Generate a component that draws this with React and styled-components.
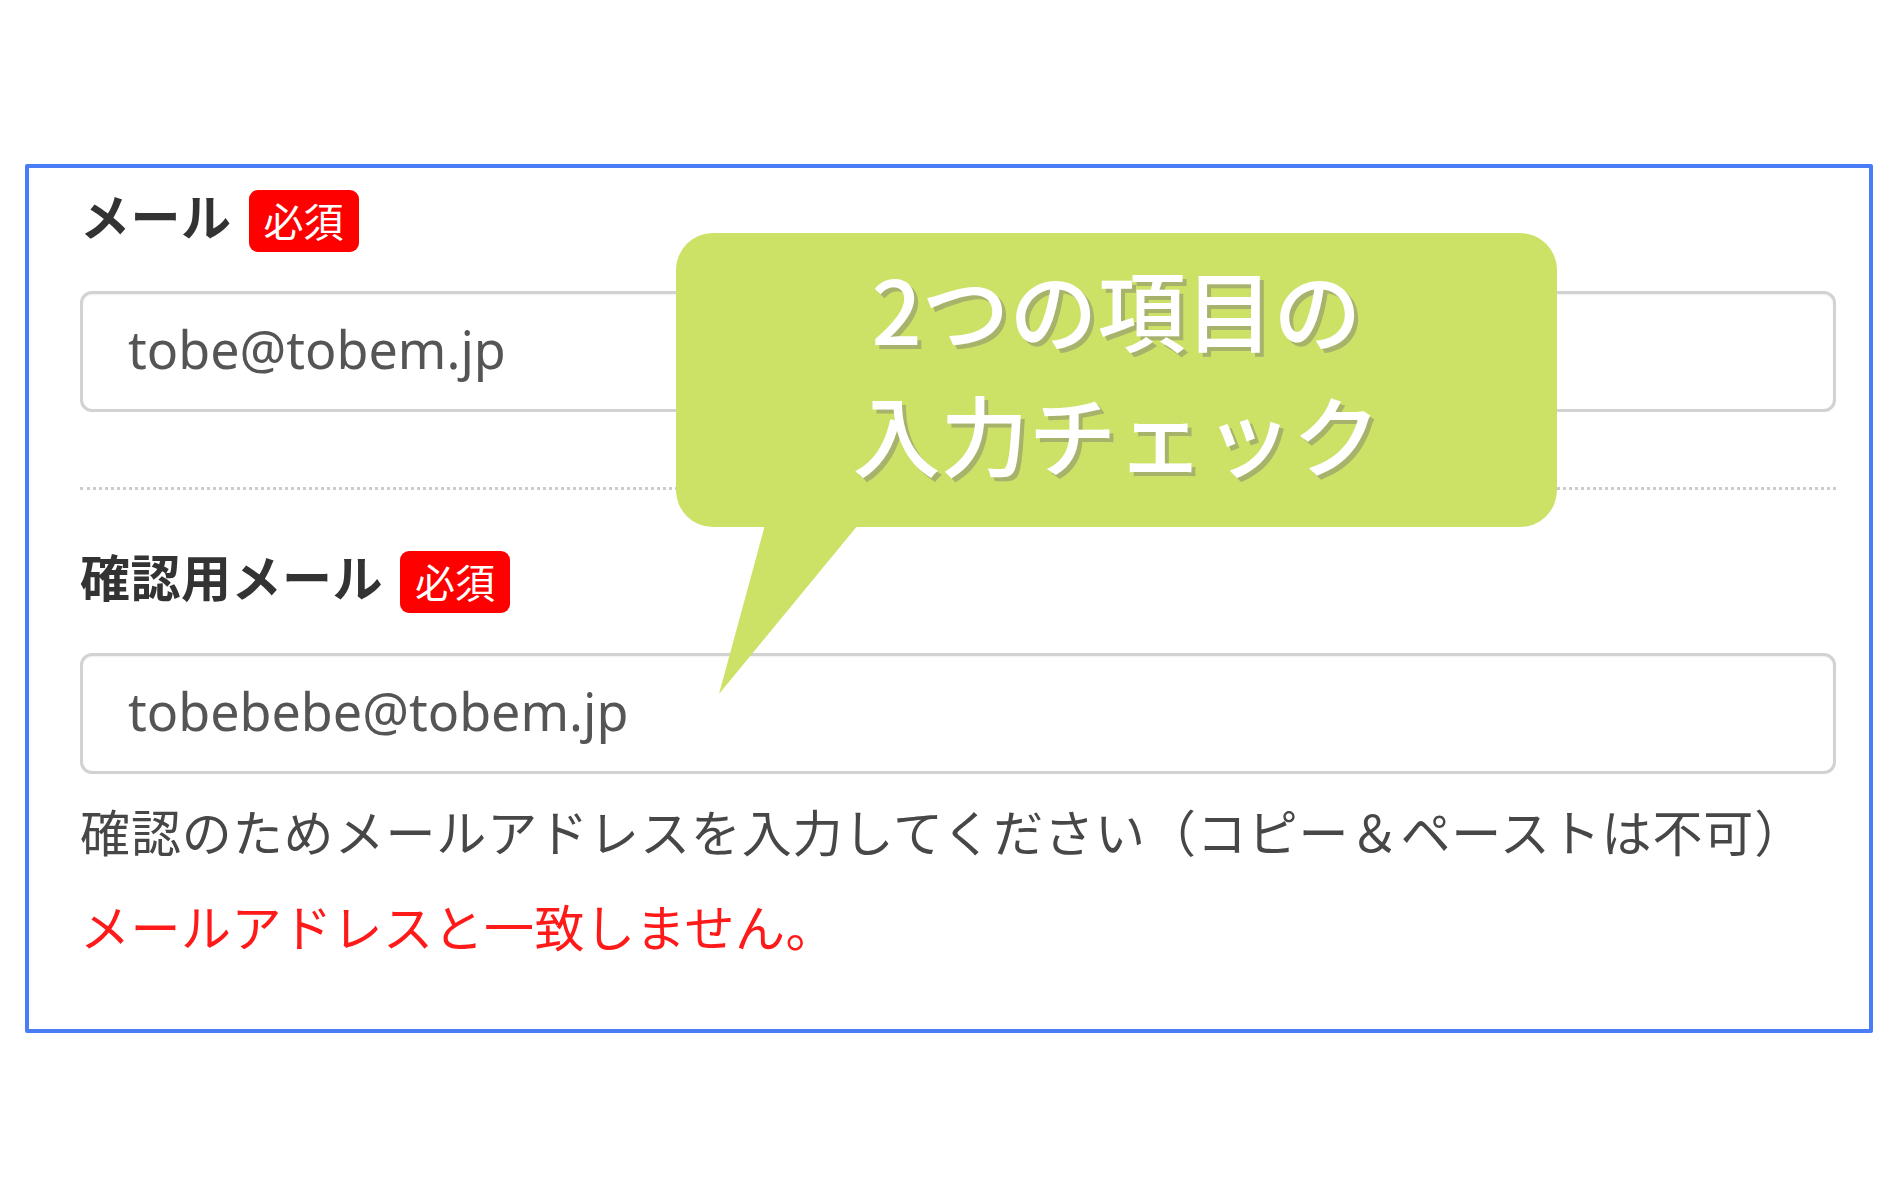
import React from "react";
import styled, { createGlobalStyle } from "styled-components";

const GlobalStyle = createGlobalStyle`
  html, body { margin: 0; padding: 0; background: #ffffff; }
  body { font-family: "Noto Sans CJK JP", sans-serif; }
  *, *::before, *::after { box-sizing: border-box; }
`;

const Page = styled.div`
  width: 1900px;
  height: 1200px;
  padding: 164px 0 0 25px;
  background: #ffffff;
`;

const FormBox = styled.section`
  position: relative;
  width: 1848px;
  border: 4px solid #4a7cf7;
  border-radius: 2px;
  padding: 22px 33px 64px 51px;
  display: flex;
  flex-direction: column;
`;

const LabelRow = styled.div`
  display: flex;
  align-items: center;
  gap: 17px;
  height: 62px;
  margin-top: ${(p) => p.$top || 0}px;
`;

const LabelText = styled.span`
  font-family: "Noto Sans CJK JP", sans-serif;
  font-weight: 700;
  font-size: 50px;
  line-height: 1;
  color: #333333;
  letter-spacing: 0.5px;
  margin-bottom: 14px;
`;

const RequiredBadge = styled.span`
  display: inline-flex;
  align-items: center;
  justify-content: center;
  height: 62px;
  padding: 0 15px 3px;
  background: #ff0000;
  border-radius: 9px;
  color: #ffffff;
  font-family: "Noto Sans CJK JP", sans-serif;
  font-size: 40px;
  font-weight: 400;
  line-height: 1;
`;

const TextInput = styled.input`
  display: block;
  width: 100%;
  height: 121px;
  margin-top: ${(p) => p.$top}px;
  padding: 0 0 6px 45px;
  border: 3px solid #d2d2d2;
  border-radius: 12px;
  box-shadow: inset 0 1px 2px rgba(0, 0, 0, 0.06);
  background: #ffffff;
  font-family: "Noto Sans", "Noto Sans CJK JP", sans-serif;
  font-size: 52px;
  color: #555555;
  outline: none;
`;

const Separator = styled.hr`
  width: 100%;
  margin: 75px 0 0;
  border: 0;
  border-top: 3px dotted #cccccc;
  height: 0;
`;

const HelpText = styled.p`
  margin: 16px 0 0;
  font-family: "Noto Sans CJK JP", sans-serif;
  font-size: 50px;
  line-height: 80px;
  letter-spacing: 0.9px;
  color: #474747;
  white-space: nowrap;
`;

const ErrorText = styled.p`
  margin: 15px 0 0;
  font-family: "Noto Sans CJK JP", sans-serif;
  font-size: 50px;
  line-height: 80px;
  letter-spacing: 0.5px;
  color: #ff1a1a;
  white-space: nowrap;
`;

const Bubble = styled.div`
  position: absolute;
  left: 647px;
  top: 65px;
  width: 881px;
  height: 294px;
  background: #cbe266;
  border-radius: 37px;
  display: flex;
  flex-direction: column;
  align-items: center;
  justify-content: center;
  padding-bottom: 22px;
`;

const BubbleLine = styled.div`
  font-family: "Noto Sans CJK JP", sans-serif;
  font-weight: 500;
  font-size: 88px;
  line-height: 125px;
  color: #ffffff;
  text-shadow: 4px 4px 0 #a7b26b;
  white-space: nowrap;
`;

const Tail = styled.svg`
  position: absolute;
  left: 0;
  top: 292px;
  overflow: visible;
`;

export default function App() {
  return (
    <>
      <GlobalStyle />
      <Page>
        <FormBox>
          <LabelRow>
            <LabelText>メール</LabelText>
            <RequiredBadge>必須</RequiredBadge>
          </LabelRow>
          <TextInput $top={39} type="text" readOnly value="tobe@tobem.jp" />
          <Separator />
          <LabelRow $top={61}>
            <LabelText>確認用メール</LabelText>
            <RequiredBadge>必須</RequiredBadge>
          </LabelRow>
          <TextInput $top={40} type="text" readOnly value="tobebebe@tobem.jp" />
          <HelpText>確認のためメールアドレスを入力してください（コピー＆ペーストは不可）</HelpText>
          <ErrorText>メールアドレスと一致しません。</ErrorText>

          <Bubble>
            <BubbleLine>2つの項目の</BubbleLine>
            <BubbleLine>入力チェック</BubbleLine>
            <Tail width="200" height="172" viewBox="0 0 200 172">
              <polygon points="89,0 182,0 43,169" fill="#cbe266" />
            </Tail>
          </Bubble>
        </FormBox>
      </Page>
    </>
  );
}
